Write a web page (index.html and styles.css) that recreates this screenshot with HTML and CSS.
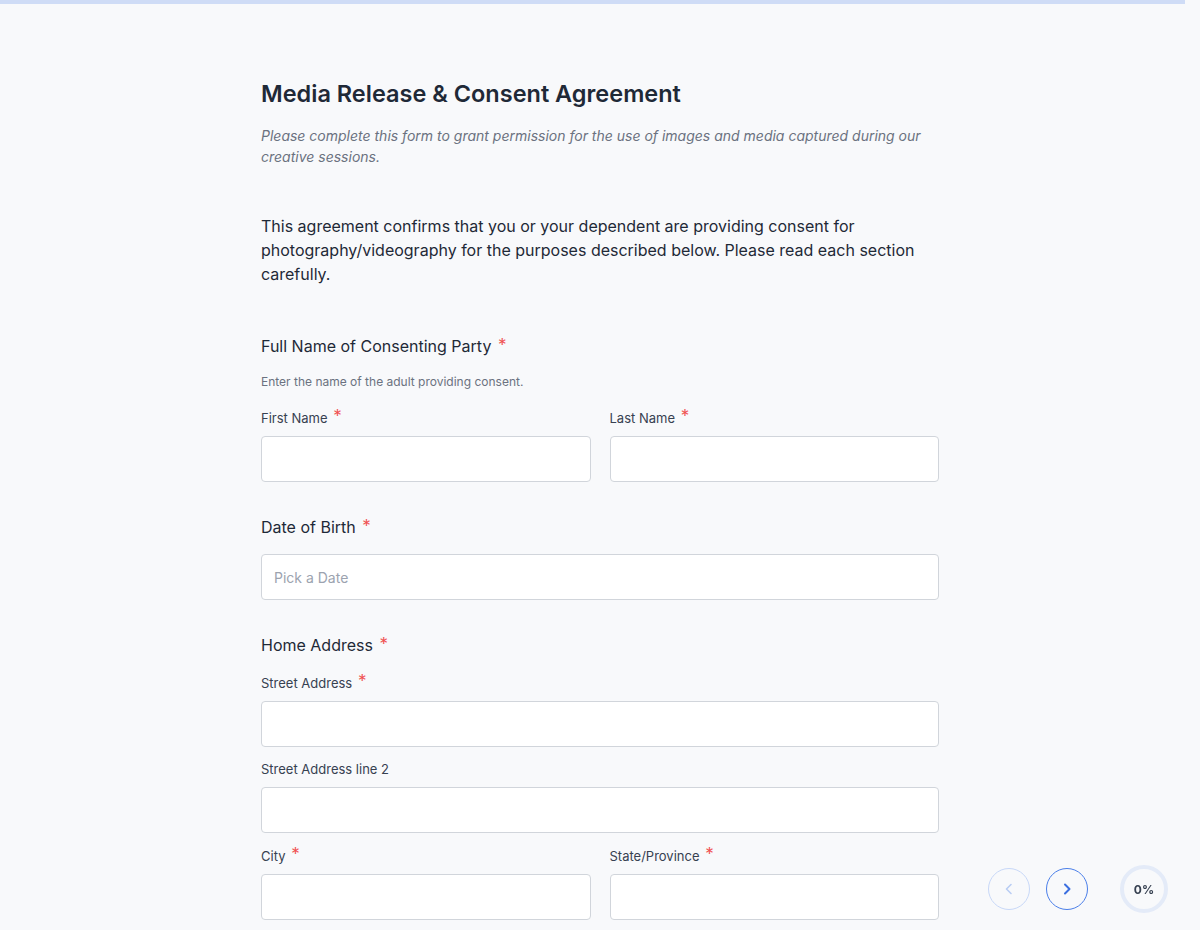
FILE: index.html
```html
<!DOCTYPE html>
<html lang="en">
<head>
  <meta charset="UTF-8">
  <meta name="viewport" content="width=device-width, initial-scale=1.0">
  <title>Media Release &amp; Consent Agreement</title>
  <link rel="stylesheet" href="styles.css">
</head>
<body>
  <div class="progress-bar"></div>

  <div class="container">
    <h1>Media Release &amp; Consent Agreement</h1>
    <p class="subtitle">Please complete this form to grant permission for the use of images and media captured during our creative sessions.</p>

    <p class="intro">This agreement confirms that you or your dependent are providing consent for photography/videography for the purposes described below. Please read each section carefully.</p>

    <form id="consent-form">
      <div class="section">
        <h2 class="section-title">Full Name of Consenting Party <span class="req">*</span></h2>
        <p class="hint">Enter the name of the adult providing consent.</p>
        <div class="row">
          <div class="form-group">
            <label for="first-name">First Name <span class="req">*</span></label>
            <input type="text" id="first-name" name="firstName">
          </div>
          <div class="form-group">
            <label for="last-name">Last Name <span class="req">*</span></label>
            <input type="text" id="last-name" name="lastName">
          </div>
        </div>
      </div>

      <div class="section">
        <h2 class="section-title">Date of Birth <span class="req">*</span></h2>
        <input type="text" id="dob" name="dob" class="single" placeholder="Pick a Date">
      </div>

      <div class="section">
        <h2 class="section-title">Home Address <span class="req">*</span></h2>
        <div class="form-group">
          <label for="street">Street Address <span class="req">*</span></label>
          <input type="text" id="street" name="street">
        </div>
        <div class="form-group">
          <label for="street2">Street Address line 2</label>
          <input type="text" id="street2" name="street2">
        </div>
        <div class="row">
          <div class="form-group">
            <label for="city">City <span class="req">*</span></label>
            <input type="text" id="city" name="city">
          </div>
          <div class="form-group">
            <label for="state">State/Province <span class="req">*</span></label>
            <input type="text" id="state" name="state">
          </div>
        </div>
      </div>
    </form>
  </div>

  <!-- floating navigation -->
  <div class="nav-controls">
    <button class="nav-btn prev" type="button" aria-label="Previous">
      <svg width="16" height="16" viewBox="0 0 16 16" fill="none"><path d="M10 3.5 5.5 8l4.5 4.5" stroke="currentColor" stroke-width="1.6" stroke-linecap="round" stroke-linejoin="round"/></svg>
    </button>
    <button class="nav-btn next" type="button" aria-label="Next">
      <svg width="16" height="16" viewBox="0 0 16 16" fill="none"><path d="M6 3.5 10.5 8 6 12.5" stroke="currentColor" stroke-width="2" stroke-linecap="round" stroke-linejoin="round"/></svg>
    </button>
    <div class="progress-ring">0%</div>
  </div>
</body>
</html>
```

FILE: styles.css
```css
body {
  font-family: Inter, 'Noto Sans', sans-serif;
  background: #f8f9fb;
  color: #374151;
  margin: 0;
  padding: 0;
}
.progress-bar {
  height: 4px;
  margin-right: 15px;
  background: #cfdcf6;
}
.container {
  width: 678px;
  margin: 0 auto;
  padding: 74px 0 40px 0;
}
h1 {
  font-size: 23.5px;
  line-height: 32px;
  font-weight: 600;
  color: #1f2937;
  margin: 0 0 15px 0;
}
.subtitle {
  font-size: 14px;
  line-height: 21px;
  font-style: italic;
  color: #6b7280;
  margin: 0 0 47px 0;
  padding-right: 10px;
}
.intro {
  font-size: 16px;
  line-height: 24px;
  color: #1f2937;
  margin: 0 0 48px 0;
}
.section {
  margin-bottom: 33px;
}
.section-title {
  font-size: 16px;
  line-height: 24px;
  font-weight: 400;
  color: #1f2937;
  margin: 0 0 15px 0;
}
.hint {
  font-size: 12px;
  line-height: 18px;
  color: #6b7280;
  margin: 0 0 16px 0;
}
.row {
  display: grid;
  grid-template-columns: 1fr 1fr;
  gap: 19px;
}
.form-group {
  margin-bottom: 12px;
}
.row .form-group {
  margin-bottom: 0;
}
label {
  display: block;
  font-size: 13px;
  line-height: 20px;
  color: #374151;
  margin-bottom: 8px;
}
.req {
  color: #f05252;
  font-size: 17px;
  position: relative;
  top: -1px;
  margin-left: 2px;
}
input[type="text"] {
  width: 100%;
  height: 46px;
  padding: 0 12px;
  border: 1px solid #d1d5db;
  border-radius: 4px;
  background: #fff;
  color: #1f2937;
  font-family: inherit;
  font-size: 14px;
  box-sizing: border-box;
}
input[type="text"]::placeholder {
  color: #9ca3af;
}
.single {
  display: block;
}
.nav-controls {
  position: fixed;
  right: 32px;
  bottom: 17px;
  display: flex;
  align-items: center;
}
.nav-btn {
  width: 42px;
  height: 42px;
  border-radius: 50%;
  background: #f8f9fb;
  display: flex;
  align-items: center;
  justify-content: center;
  padding: 0;
  cursor: pointer;
  margin-right: 16px;
}
.nav-btn.prev {
  border: 1.5px solid #c7d7f7;
  color: #b9cdf4;
}
.nav-btn.next {
  border: 1.5px solid #4a7ee8;
  color: #3b6fe0;
  margin-right: 32px;
}
.progress-ring {
  width: 40px;
  height: 40px;
  border-radius: 50%;
  border: 4px solid #e4ebf8;
  display: flex;
  align-items: center;
  justify-content: center;
  font-size: 12px;
  font-weight: 700;
  color: #374151;
}
```
